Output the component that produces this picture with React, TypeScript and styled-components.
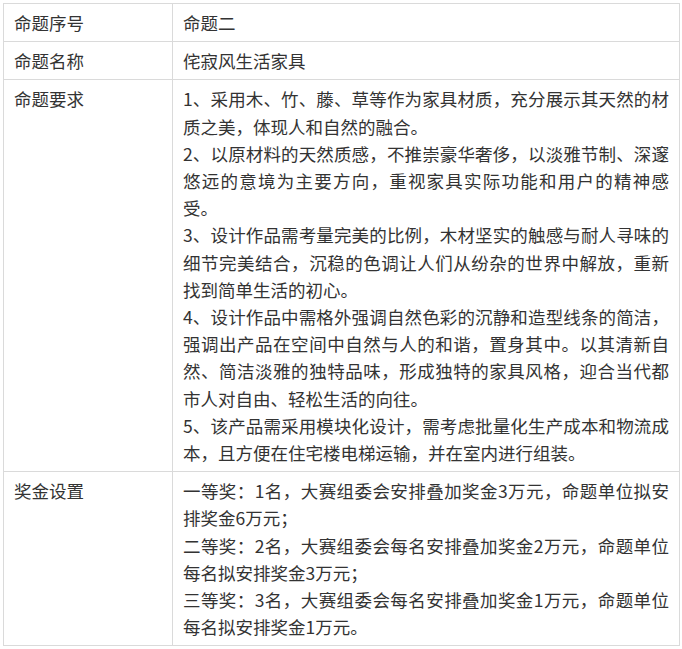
import styled, { createGlobalStyle } from "styled-components";

const GlobalStyle = createGlobalStyle`
  html, body {
    margin: 0;
    padding: 0;
    background: #fff;
  }
  body {
    font-family: "Microsoft YaHei", "Noto Sans CJK SC", "Noto Sans", sans-serif;
    color: #333;
  }
`;

const Page = styled.div`
  padding: 3px 0 0 3px;
`;

const Table = styled.table`
  width: 677px;
  border-collapse: collapse;
  table-layout: fixed;
  font-size: 17.5px;
  line-height: 27.2px;
`;

const LabelCell = styled.td`
  width: 169px;
  box-sizing: border-box;
  border: 1px solid #dadada;
  padding: 5px 10px;
  vertical-align: top;
`;

const ValueCell = styled.td`
  border: 1px solid #dadada;
  padding: 5px 10px;
  vertical-align: top;
  text-align: justify;
  word-break: break-all;
`;

const Line = styled.p`
  margin: 0;
`;

const rows: { label: string; lines: string[] }[] = [
  { label: "命题序号", lines: ["命题二"] },
  { label: "命题名称", lines: ["侘寂风生活家具"] },
  {
    label: "命题要求",
    lines: [
      "1、采用木、竹、藤、草等作为家具材质，充分展示其天然的材质之美，体现人和自然的融合。",
      "2、以原材料的天然质感，不推崇豪华奢侈，以淡雅节制、深邃悠远的意境为主要方向，重视家具实际功能和用户的精神感受。",
      "3、设计作品需考量完美的比例，木材坚实的触感与耐人寻味的细节完美结合，沉稳的色调让人们从纷杂的世界中解放，重新找到简单生活的初心。",
      "4、设计作品中需格外强调自然色彩的沉静和造型线条的简洁，强调出产品在空间中自然与人的和谐，置身其中。以其清新自然、简洁淡雅的独特品味，形成独特的家具风格，迎合当代都市人对自由、轻松生活的向往。",
      "5、该产品需采用模块化设计，需考虑批量化生产成本和物流成本，且方便在住宅楼电梯运输，并在室内进行组装。",
    ],
  },
  {
    label: "奖金设置",
    lines: [
      "一等奖：1名，大赛组委会安排叠加奖金3万元，命题单位拟安排奖金6万元；",
      "二等奖：2名，大赛组委会每名安排叠加奖金2万元，命题单位每名拟安排奖金3万元；",
      "三等奖：3名，大赛组委会每名安排叠加奖金1万元，命题单位每名拟安排奖金1万元。",
    ],
  },
];

function App() {
  return (
    <>
      <GlobalStyle />
      <Page>
        <Table>
          <tbody>
            {rows.map((row) => (
              <tr key={row.label}>
                <LabelCell>{row.label}</LabelCell>
                <ValueCell>
                  {row.lines.map((line) => (
                    <Line key={line}>{line}</Line>
                  ))}
                </ValueCell>
              </tr>
            ))}
          </tbody>
        </Table>
      </Page>
    </>
  );
}

export default App;
